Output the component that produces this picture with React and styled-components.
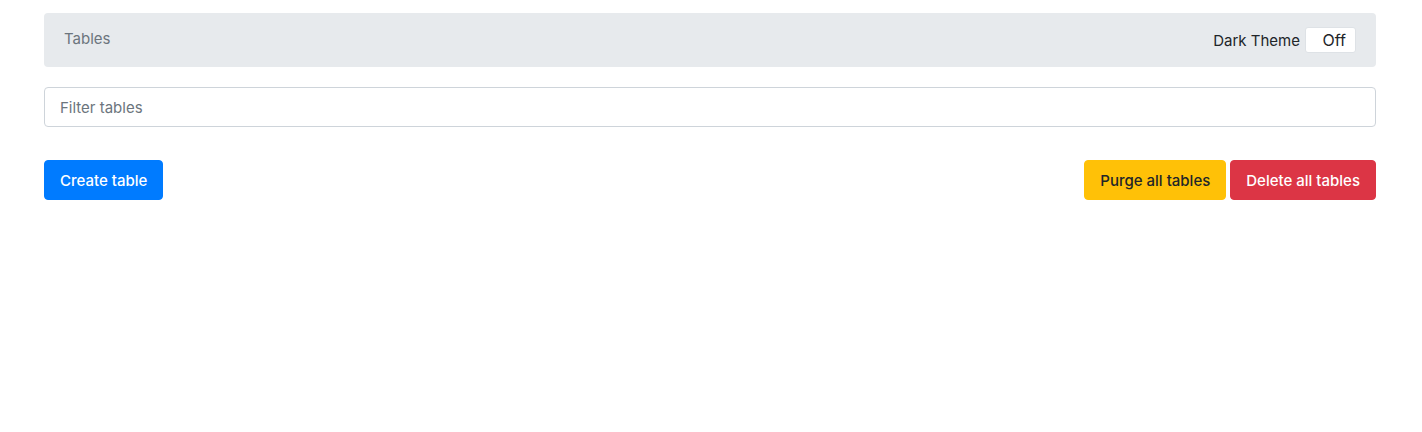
import React, { useState } from 'react';
import styled, { createGlobalStyle } from 'styled-components';

const GlobalStyle = createGlobalStyle`
    body {
        margin: 0;
        font-family: Inter, 'Liberation Sans', sans-serif;
        font-size: 15px;
        color: #212529;
        background: #fff;
    }
    * { box-sizing: border-box; }
`;

const Page = styled.div`
    padding: 13px 46px 0 44px;
`;

const Breadcrumb = styled.nav`
    display: flex;
    align-items: center;
    justify-content: space-between;
    height: 54px;
    padding: 0 20px;
    background-color: #e7eaed;
    border-radius: 4px;
    margin-bottom: 20px;
`;

const Crumb = styled.span`
    color: #6c757d;
    font-size: 15px;
    margin-top: -4px;
`;

const ThemeToggle = styled.label`
    display: flex;
    align-items: center;
    gap: 5px;
    font-size: 15px;
    color: #212529;
`;

const ToggleBox = styled.button`
    width: 51px;
    height: 26px;
    border: 1px solid #dee2e6;
    border-radius: 3px;
    background: #fff;
    font-family: inherit;
    font-size: 16px;
    color: #212529;
    text-align: right;
    padding: 0 9px 0 0;
    cursor: pointer;
`;

const FilterInput = styled.input`
    display: block;
    width: 100%;
    height: 40px;
    padding: 0 15px;
    font-family: inherit;
    font-size: 15px;
    color: #495057;
    border: 1px solid #ced4da;
    border-radius: 4px;
    margin-bottom: 33px;

    &::placeholder {
        color: #6c757d;
    }
`;

const Actions = styled.div`
    display: flex;
    justify-content: space-between;
    align-items: center;
`;

const Group = styled.div`
    display: flex;
    gap: 4px;
`;

const colors = {
    primary: { bg: '#007bff', fg: '#fff' },
    warning: { bg: '#ffc107', fg: '#212529' },
    danger: { bg: '#dc3545', fg: '#fff' },
};

const Button = styled.button`
    height: 40px;
    padding: 0 15px;
    font-family: inherit;
    font-size: 15px;
    font-weight: 500;
    border: 1px solid ${(p) => colors[p.$variant].bg};
    background-color: ${(p) => colors[p.$variant].bg};
    color: ${(p) => colors[p.$variant].fg};
    border-radius: 4px;
    cursor: pointer;
`;

export default function App() {
    const [dark, setDark] = useState(false);
    return (
        <>
            <GlobalStyle />
            <Page>
                <Breadcrumb>
                    <Crumb>Tables</Crumb>
                    <ThemeToggle>
                        Dark Theme
                        <ToggleBox onClick={() => setDark(!dark)}>{dark ? 'On' : 'Off'}</ToggleBox>
                    </ThemeToggle>
                </Breadcrumb>
                <FilterInput placeholder="Filter tables" />
                <Actions>
                    <Button $variant="primary">Create table</Button>
                    <Group>
                        <Button $variant="warning">Purge all tables</Button>
                        <Button $variant="danger">Delete all tables</Button>
                    </Group>
                </Actions>
            </Page>
        </>
    );
}
